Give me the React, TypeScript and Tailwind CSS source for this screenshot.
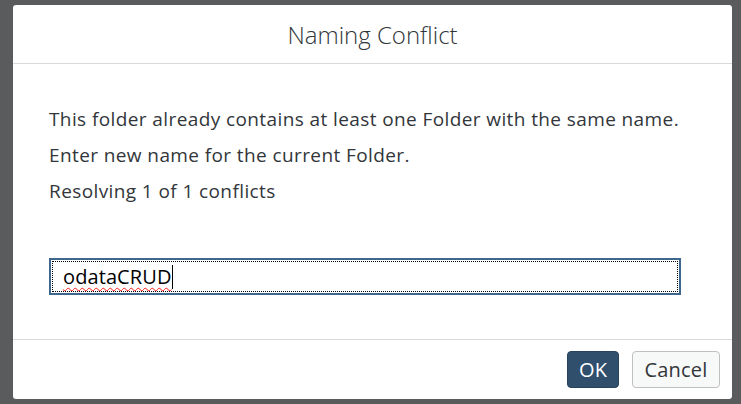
import React from 'react';

const App: React.FC = () => {
  return (
    <div
      className="w-[741px] h-[404px] bg-[#5a5b5c] pt-[5px] pl-[13px] overflow-hidden"
      style={{ fontFamily: '"Open Sans", "Liberation Sans", Arial, sans-serif' }}
    >
      <div className="w-[719px] h-[394px] bg-white rounded-[3px] flex flex-col text-[#32363a]">
        {/* Header */}
        <div className="h-[59px] border-b border-[#d9d9d9] flex items-center justify-center">
          <h1 className="text-[24px] font-light pt-[2px]">Naming Conflict</h1>
        </div>

        {/* Body */}
        <div className="flex-1 pt-[37px] pl-[36px] pr-[39px]">
          <p className="text-[19px] leading-[36px] tracking-[0.4px]">This folder already contains at least one Folder with the same name.</p>
          <p className="text-[19px] leading-[36px] tracking-[0.4px]">Enter new name for the current Folder.</p>
          <p className="text-[19px] leading-[36px] tracking-[0.4px]">Resolving 1 of 1 conflicts</p>

          <div className="mt-[49px] w-[632px] h-[37px] border-2 border-[#3f668c] p-[1px]">
            <div className="h-full border border-dotted border-black flex items-center pl-[10px]">
              <span className="text-[20px] tracking-[0.1px] text-black underline decoration-wavy decoration-[#ff1a1a] decoration-1 underline-offset-[3px]">
                odataCRUD
              </span>
              <span className="w-px h-[24px] bg-black" />
            </div>
          </div>
        </div>

        {/* Footer */}
        <div className="h-[60px] border-t border-[#d9d9d9] flex items-center justify-end pr-[12px] gap-[13px]">
          <button className="w-[52px] h-[37px] rounded-[4px] bg-[#2f4f6d] border border-[#27445f] text-white text-[20px]">
            OK
          </button>
          <button className="w-[88px] h-[37px] rounded-[4px] bg-[#f7f8f8] border border-[#bfbfbf] text-[#32363a] text-[20px] tracking-[0.2px]">
            Cancel
          </button>
        </div>
      </div>
    </div>
  );
};

export default App;
